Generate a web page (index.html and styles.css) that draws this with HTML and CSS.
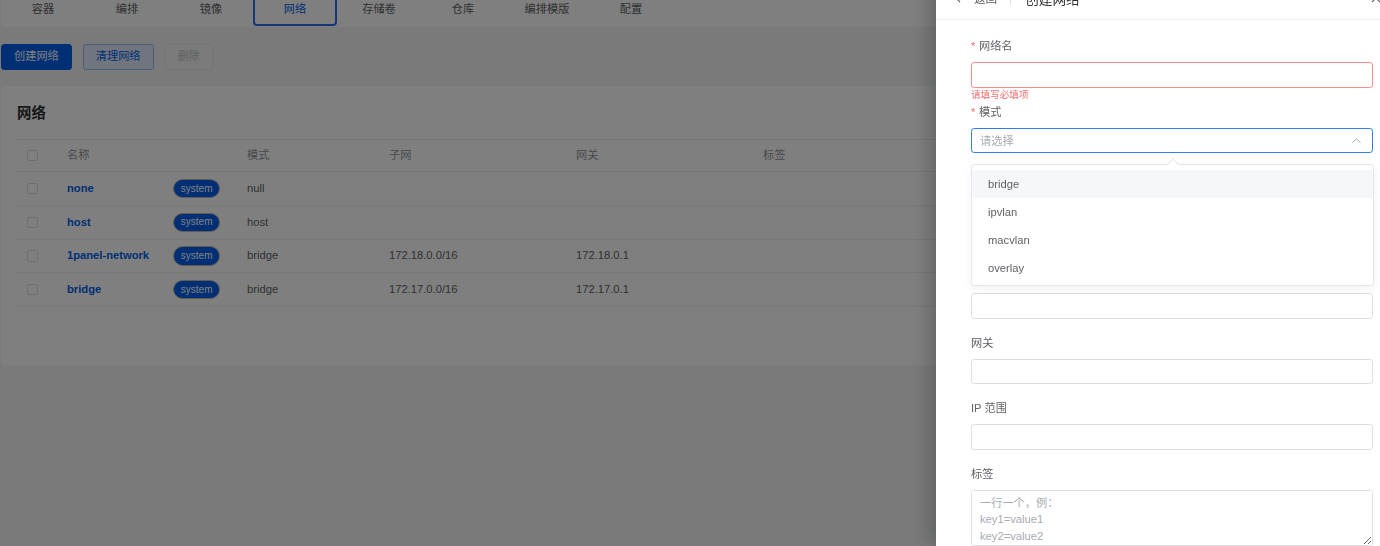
FILE: index.html
```html
<!DOCTYPE html>
<html lang="zh-CN">
<head>
<meta charset="utf-8">
<title>网络</title>
<link rel="stylesheet" href="styles.css">
</head>
<body>
<div class="app">
  <nav class="tabs-card">
    <a class="tab">容器</a>
    <a class="tab">编排</a>
    <a class="tab">镜像</a>
    <a class="tab active">网络</a>
    <a class="tab">存储卷</a>
    <a class="tab">仓库</a>
    <a class="tab">编排模版</a>
    <a class="tab">配置</a>
  </nav>

  <div class="toolbar">
    <button class="btn btn-primary">创建网络</button>
    <button class="btn btn-plain">清理网络</button>
    <button class="btn btn-disabled">删除</button>
  </div>

  <section class="card">
    <h2 class="card-title">网络</h2>
    <div class="table">
      <div class="row head">
        <div class="cell"><span class="checkbox"></span></div>
        <div class="cell">名称</div>
        <div class="cell">模式</div>
        <div class="cell">子网</div>
        <div class="cell">网关</div>
        <div class="cell">标签</div>
      </div>
      <div class="row">
        <div class="cell"><span class="checkbox"></span></div>
        <div class="cell"><span class="name">none</span><span class="tag">system</span></div>
        <div class="cell">null</div>
        <div class="cell"></div>
        <div class="cell"></div>
        <div class="cell"></div>
      </div>
      <div class="row">
        <div class="cell"><span class="checkbox"></span></div>
        <div class="cell"><span class="name">host</span><span class="tag">system</span></div>
        <div class="cell">host</div>
        <div class="cell"></div>
        <div class="cell"></div>
        <div class="cell"></div>
      </div>
      <div class="row">
        <div class="cell"><span class="checkbox"></span></div>
        <div class="cell"><span class="name">1panel-network</span><span class="tag">system</span></div>
        <div class="cell">bridge</div>
        <div class="cell">172.18.0.0/16</div>
        <div class="cell">172.18.0.1</div>
        <div class="cell"></div>
      </div>
      <div class="row">
        <div class="cell"><span class="checkbox"></span></div>
        <div class="cell"><span class="name">bridge</span><span class="tag">system</span></div>
        <div class="cell">bridge</div>
        <div class="cell">172.17.0.0/16</div>
        <div class="cell">172.17.0.1</div>
        <div class="cell"></div>
      </div>
    </div>
  </section>
</div>

<div class="mask"></div>

<aside class="drawer">
  <header class="drawer-header">
    <svg class="back-icon" width="6" height="10" viewBox="0 0 6 10"><path d="M5 1 1 5l4 4" fill="none" stroke="#606266" stroke-width="1.1"/></svg>
    <span class="back-text">返回</span>
    <span class="divider"></span>
    <span class="drawer-title">创建网络</span>
    <svg class="close-icon" width="10" height="10" viewBox="0 0 10 10"><path d="M1 1l8 8M9 1 1 9" stroke="#606266" stroke-width="1.1"/></svg>
  </header>

  <div class="drawer-body">
    <div class="form-item">
      <div class="label required">网络名</div>
      <input class="input is-error" type="text">
      <div class="error-msg">请填写必填项</div>
    </div>

    <div class="form-item">
      <div class="label required">模式</div>
      <div class="input select is-focus">
        <span class="placeholder">请选择</span>
        <svg width="9" height="5" viewBox="0 0 9 5"><path d="M0.5 4.5 4.5 0.8l4 3.7" fill="none" stroke="#a8abb2" stroke-width="1"/></svg>
      </div>
      <div class="dropdown">
        <span class="dropdown-arrow"></span>
        <div class="option hover">bridge</div>
        <div class="option">ipvlan</div>
        <div class="option">macvlan</div>
        <div class="option">overlay</div>
      </div>
    </div>

    <!-- driver options, sits under the open select menu -->
    <div class="form-item">
      <div class="label"></div>
      <textarea class="input textarea options"></textarea>
    </div>

    <div class="form-item">
      <div class="label"></div>
      <input class="input" type="text">
    </div>

    <div class="form-item">
      <div class="label">网关</div>
      <input class="input" type="text">
    </div>

    <div class="form-item">
      <div class="label">IP 范围</div>
      <input class="input" type="text">
    </div>

    <div class="form-item">
      <div class="label">标签</div>
      <textarea class="input textarea labels" placeholder="一行一个，例：&#10;key1=value1&#10;key2=value2"></textarea>
    </div>
  </div>
</aside>
</body>
</html>
```

FILE: styles.css
```css
* {
  box-sizing: border-box;
}

html,
body {
  margin: 0;
  height: 100%;
  overflow: hidden;
}

body {
  background: #f4f5f7;
  font-family: "Liberation Sans", "Noto Sans CJK SC", sans-serif;
  font-size: 11.2px;
  color: #606266;
}

/* ---------- page behind the drawer ---------- */

.app {
  margin-top: -6px;
  padding: 0 2px 0 1px;
}

.tabs-card {
  display: flex;
  height: 33px;
  padding: 2px 0 1px;
  background: #fff;
  border-radius: 4px;
}

.tab {
  width: 84px;
  display: flex;
  align-items: center;
  justify-content: center;
  padding-bottom: 2px;
  border: 2px solid transparent;
  border-radius: 4px;
  line-height: 1;
  color: #606266;
}

.tab.active {
  border-color: #2a6cf0;
  color: #005eeb;
}

.toolbar {
  display: flex;
  gap: 11px;
  margin-top: 17px;
}

.btn {
  display: inline-flex;
  align-items: center;
  height: 25.6px;
  padding: 0 12px;
  border: 1px solid;
  border-radius: 3.2px;
  font-family: inherit;
  font-size: 11.2px;
  line-height: 1;
}

.btn-primary {
  background: #005eeb;
  border-color: #005eeb;
  color: #fff;
}

.btn-plain {
  background: #e3edfd;
  border-color: #8fb8f6;
  color: #005eeb;
}

.btn-disabled {
  background: #f6f7f9;
  border-color: #e6e8eb;
  color: #c0c4cc;
}

.card {
  margin-top: 16.4px;
  padding: 17px 16px 58px;
  background: #fff;
  border-radius: 4px;
}

.card-title {
  margin: 0 0 16px;
  font-size: 14.4px;
  font-weight: 700;
  line-height: 20px;
  color: #303133;
}

.table {
  border-top: 1px solid #ebeef5;
}

.row {
  display: grid;
  grid-template-columns: 40px 180px 142px 187px 187px 1fr;
  align-items: center;
  height: 33.7px;
  border-bottom: 1px solid #ebeef5;
  color: #606266;
}

.row.head {
  height: 32.3px;
  color: #909399;
}

.cell {
  display: flex;
  align-items: center;
  padding-left: 10px;
  line-height: 1;
  white-space: nowrap;
}

.checkbox {
  width: 11.2px;
  height: 11.2px;
  border: 1px solid #dcdfe6;
  border-radius: 2px;
  background: #fff;
}

.name {
  width: 106px;
  font-weight: 700;
  color: #005eeb;
}

.tag {
  display: inline-flex;
  align-items: center;
  height: 19.2px;
  padding: 0 6.8px;
  border: 1px solid #c9b9a6;
  border-radius: 10px;
  background: #005eeb;
  color: #fff;
  font-size: 10px;
}

.mask {
  position: fixed;
  inset: 0;
  background: rgba(0, 0, 0, 0.5);
}

/* ---------- drawer ---------- */

.drawer {
  position: fixed;
  top: -24px;
  right: 0;
  bottom: 0;
  width: 444px;
  background: #fff;
  box-shadow: -6px 0 18px rgba(0, 0, 0, 0.22);
}

.drawer-header {
  display: flex;
  align-items: center;
  height: 44px;
  padding-left: 19px;
  border-bottom: 1px solid #eef0f3;
}

.back-text {
  margin-left: 13px;
  color: #606266;
  font-size: 11.6px;
}

.divider {
  width: 1px;
  height: 14px;
  margin: 0 14px 0 13px;
  background: #dcdfe6;
}

.drawer-title {
  font-size: 13.6px;
  color: #303133;
}

.close-icon {
  margin-left: auto;
  margin-right: -1px;
}

.drawer-body {
  padding: 18px 7px 0 35px;
}

.form-item {
  position: relative;
  margin-bottom: 16px;
}

.label {
  height: 17.6px;
  margin-bottom: 6.4px;
  line-height: 17.6px;
  color: #606266;
}

.label.required::before {
  content: "*";
  margin-right: 3.6px;
  color: #f56c6c;
}

.input {
  display: block;
  width: 100%;
  height: 25.6px;
  margin: 0;
  padding: 0 8px;
  border: 1px solid #dcdfe6;
  border-radius: 3.2px;
  background: #fff;
  font-family: inherit;
  font-size: 11.2px;
  color: #606266;
  outline: none;
}

.input.is-error {
  border-color: #f78989;
}

.error-msg {
  position: absolute;
  top: 100%;
  left: 0;
  padding-top: 2px;
  font-size: 9.6px;
  line-height: 1;
  color: #f56c6c;
}

.select {
  display: flex;
  align-items: center;
  justify-content: space-between;
  padding: 0 11px 0 8px;
}

.select.is-focus {
  border-color: #2f7bf5;
}

.placeholder {
  color: #a8abb2;
}

.dropdown {
  position: absolute;
  top: calc(100% + 10.8px);
  left: 0;
  right: -1px;
  z-index: 2;
  padding: 5px 0 3px;
  background: #fff;
  border: 1px solid #e4e7ed;
  border-radius: 3.2px;
  box-shadow: 0 3px 10px rgba(0, 0, 0, 0.06);
}

.dropdown-arrow {
  position: absolute;
  top: -5px;
  left: calc(50% - 4px);
  width: 8px;
  height: 8px;
  background: #fff;
  border-top: 1px solid #e4e7ed;
  border-left: 1px solid #e4e7ed;
  transform: rotate(45deg);
}

.option {
  height: 28px;
  padding-left: 16px;
  line-height: 28px;
  color: #606266;
}

.option.hover {
  background: #f5f7fa;
}

.textarea {
  padding: 4px 8px;
  line-height: 16.8px;
  resize: vertical;
}

.textarea::placeholder {
  color: #a8abb2;
}

.textarea.options {
  height: 59.8px;
}

.textarea.labels {
  height: 56px;
}
```
